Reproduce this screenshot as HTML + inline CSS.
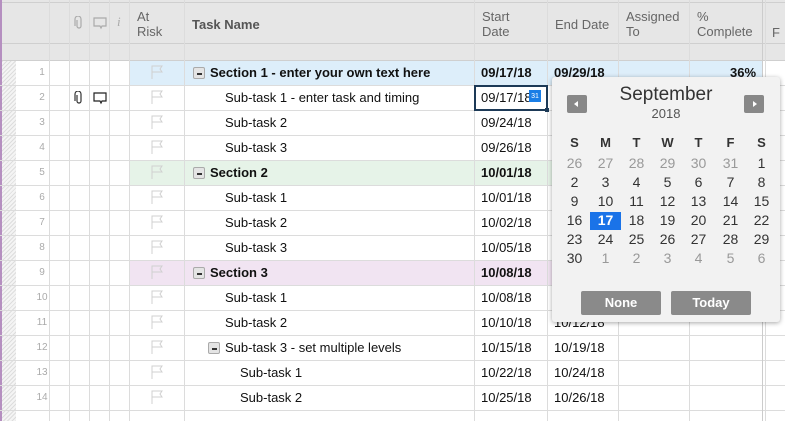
<!DOCTYPE html>
<html><head><style>
*{margin:0;padding:0;box-sizing:border-box}
body{width:785px;height:421px;overflow:hidden;background:#fff;font-family:"Liberation Sans",Arial,sans-serif;font-size:13px;color:#111;position:relative}
.a{position:absolute}
.hd{background:#e6e6e6}
.vl{position:absolute;top:0;width:1px;height:421px;background:#dcdcdc}
.hl{position:absolute;left:0;width:785px;height:1px;background:#dcdcdc}
.n{position:absolute;left:28px;width:28px;text-align:center;font-size:10px;color:#aaa}
.t{position:absolute;white-space:nowrap}
.b{font-weight:bold}
.mb{position:absolute;width:12px;height:12px;border:1px solid #aaa;background:#e4e4e4;border-radius:2px}
.mb:after{content:"";position:absolute;left:3px;top:4.5px;width:5px;height:2px;background:#333}
.fl{position:absolute;left:151px;width:12px;height:14px}
.cal{position:absolute;left:552px;top:77px;width:228px;height:245px;background:#f2f2f2;border-radius:3px;box-shadow:0 1px 5px rgba(0,0,0,.35)}
.cal span{position:absolute;width:31px;text-align:center;font-size:14px;color:#333}
.cal .g{color:#999}
.hdr{font-size:13px;color:#666}
</style></head><body>
<div class="a hd" style="left:0;top:0;width:785px;height:61px"></div>
<div class="a" style="left:0;top:2px;width:785px;height:1px;background:#cfcfcf"></div>
<div class="a" style="left:0;top:43px;width:785px;height:1px;background:#cfcfcf"></div>
<div class="a" style="left:0;top:60px;width:785px;height:1px;background:#cfcfcf"></div>
<div class="a" style="left:0;top:0;width:2px;height:421px;background:#b58fc0"></div>
<div class="a" style="left:2px;top:61px;width:14px;height:360px;background:repeating-linear-gradient(135deg,#ddd 0 1px,#f4f4f4 1px 3px)"></div>
<div class="a" style="left:129px;top:61px;width:633px;height:25px;background:#ddeefa"></div>
<div class="a" style="left:129px;top:161px;width:633px;height:25px;background:#e6f3e8"></div>
<div class="a" style="left:129px;top:261px;width:633px;height:25px;background:#f1e4f2"></div>
<div class="hl" style="top:85px"></div><div class="hl" style="top:110px"></div><div class="hl" style="top:135px"></div><div class="hl" style="top:160px"></div><div class="hl" style="top:185px"></div><div class="hl" style="top:210px"></div><div class="hl" style="top:235px"></div><div class="hl" style="top:260px"></div><div class="hl" style="top:285px"></div><div class="hl" style="top:310px"></div><div class="hl" style="top:335px"></div><div class="hl" style="top:360px"></div><div class="hl" style="top:385px"></div><div class="hl" style="top:410px"></div>
<div class="vl" style="left:49px"></div><div class="vl" style="left:69px"></div><div class="vl" style="left:89px"></div><div class="vl" style="left:109px"></div><div class="vl" style="left:129px"></div><div class="vl" style="left:184px"></div><div class="vl" style="left:474px"></div><div class="vl" style="left:547px"></div><div class="vl" style="left:618px"></div><div class="vl" style="left:689px"></div><div class="vl" style="left:762px;background:#ccc"></div><div class="vl" style="left:765px"></div>
<svg class="a" style="left:74px;top:16px" width="10" height="14" viewBox="0 0 10 14"><path d="M3 4v6a2 2 0 0 0 4 0V3a3 3 0 0 0-6 0v7" fill="none" stroke="#aaa" stroke-width="1.2"/></svg>
<svg class="a" style="left:93px;top:17px" width="14" height="13" viewBox="0 0 14 13"><path d="M1 1h12v8H9l-1 2-1-2H1z" fill="none" stroke="#aaa" stroke-width="1.2"/></svg>
<div class="t" style="left:117px;top:14px;font-style:italic;color:#aaa;font-family:'Liberation Serif',serif">i</div>
<div class="t hdr" style="left:137px;top:9px;line-height:15px">At<br>Risk</div>
<div class="t hdr b" style="left:192px;top:17px;color:#555">Task Name</div>
<div class="t hdr" style="left:482px;top:9px;line-height:15px">Start<br>Date</div>
<div class="t hdr" style="left:555px;top:17px">End Date</div>
<div class="t hdr" style="left:626px;top:9px;line-height:15px">Assigned<br>To</div>
<div class="t hdr" style="left:697px;top:9px;line-height:15px">%<br>Complete</div>
<div class="t hdr" style="left:772px;top:25px">F</div>
<div class="n" style="top:67px">1</div><div class="n" style="top:92px">2</div><div class="n" style="top:117px">3</div><div class="n" style="top:142px">4</div><div class="n" style="top:167px">5</div><div class="n" style="top:192px">6</div><div class="n" style="top:217px">7</div><div class="n" style="top:242px">8</div><div class="n" style="top:267px">9</div><div class="n" style="top:292px">10</div><div class="n" style="top:317px">11</div><div class="n" style="top:342px">12</div><div class="n" style="top:367px">13</div><div class="n" style="top:392px">14</div>
<svg width="0" height="0" style="position:absolute"><defs><path id="f" d="M1 14V1h10l-2 3 2 3H1" fill="none" stroke="#d0d0d0" stroke-width="1"/></defs></svg>
<svg class="fl" style="top:65px"><use href="#f"/></svg><svg class="fl" style="top:90px"><use href="#f"/></svg><svg class="fl" style="top:115px"><use href="#f"/></svg><svg class="fl" style="top:140px"><use href="#f"/></svg><svg class="fl" style="top:165px"><use href="#f"/></svg><svg class="fl" style="top:190px"><use href="#f"/></svg><svg class="fl" style="top:215px"><use href="#f"/></svg><svg class="fl" style="top:240px"><use href="#f"/></svg><svg class="fl" style="top:265px"><use href="#f"/></svg><svg class="fl" style="top:290px"><use href="#f"/></svg><svg class="fl" style="top:315px"><use href="#f"/></svg><svg class="fl" style="top:340px"><use href="#f"/></svg><svg class="fl" style="top:365px"><use href="#f"/></svg><svg class="fl" style="top:390px"><use href="#f"/></svg>
<svg class="a" style="left:74px;top:91px" width="10" height="14" viewBox="0 0 10 14"><path d="M3 4v6a2 2 0 0 0 4 0V3a3 3 0 0 0-6 0v7" fill="none" stroke="#333" stroke-width="1.2"/></svg>
<svg class="a" style="left:93px;top:92px" width="14" height="13" viewBox="0 0 14 13"><path d="M1 1h12v8H9l-1 2-1-2H1z" fill="none" stroke="#222" stroke-width="1.2"/></svg>
<div class="mb" style="left:193px;top:67px"></div><div class="t b" style="left:210px;top:65px">Section 1 - enter your own text here</div>
<div class="t" style="left:225px;top:90px">Sub-task 1 - enter task and timing</div>
<div class="t" style="left:225px;top:115px">Sub-task 2</div>
<div class="t" style="left:225px;top:140px">Sub-task 3</div>
<div class="mb" style="left:193px;top:167px"></div><div class="t b" style="left:210px;top:165px">Section 2</div>
<div class="t" style="left:225px;top:190px">Sub-task 1</div>
<div class="t" style="left:225px;top:215px">Sub-task 2</div>
<div class="t" style="left:225px;top:240px">Sub-task 3</div>
<div class="mb" style="left:193px;top:267px"></div><div class="t b" style="left:210px;top:265px">Section 3</div>
<div class="t" style="left:225px;top:290px">Sub-task 1</div>
<div class="t" style="left:225px;top:315px">Sub-task 2</div>
<div class="mb" style="left:208px;top:342px"></div><div class="t" style="left:225px;top:340px">Sub-task 3 - set multiple levels</div>
<div class="t" style="left:240px;top:365px">Sub-task 1</div>
<div class="t" style="left:240px;top:390px">Sub-task 2</div>
<div class="t b" style="left:481px;top:65px">09/17/18</div><div class="t b" style="left:554px;top:65px">09/29/18</div><div class="t b" style="left:730px;top:65px">36%</div>
<div class="a" style="left:474px;top:85px;width:74px;height:26px;border:2px solid #1d3a57"></div>
<div class="a" style="left:545px;top:108px;width:4px;height:4px;background:#1d3a57"></div>
<div class="t" style="left:481px;top:90px">09/17/18</div>
<div class="a" style="left:529px;top:90px;width:12px;height:12px;background:#1a7ee6;color:#fff;font-size:7px;text-align:center;line-height:14px">31</div>
<div class="t" style="left:481px;top:115px">09/24/18</div>
<div class="t" style="left:481px;top:140px">09/26/18</div>
<div class="t b" style="left:481px;top:165px">10/01/18</div>
<div class="t" style="left:481px;top:190px">10/01/18</div>
<div class="t" style="left:481px;top:215px">10/02/18</div>
<div class="t" style="left:481px;top:240px">10/05/18</div>
<div class="t b" style="left:481px;top:265px">10/08/18</div>
<div class="t" style="left:481px;top:290px">10/08/18</div>
<div class="t" style="left:481px;top:315px">10/10/18</div><div class="t" style="left:554px;top:315px">10/12/18</div>
<div class="t" style="left:481px;top:340px">10/15/18</div><div class="t" style="left:554px;top:340px">10/19/18</div>
<div class="t" style="left:481px;top:365px">10/22/18</div><div class="t" style="left:554px;top:365px">10/24/18</div>
<div class="t" style="left:481px;top:390px">10/25/18</div><div class="t" style="left:554px;top:390px">10/26/18</div>
<div class="cal">
<div class="a" style="left:15px;top:18px;width:20px;height:18px;background:#888;border-radius:2px"><div class="a" style="left:7px;top:6px;border-right:4px solid #fff;border-top:3px solid transparent;border-bottom:3px solid transparent"></div></div>
<div class="a" style="left:192px;top:18px;width:20px;height:18px;background:#888;border-radius:2px"><div class="a" style="left:9px;top:6px;border-left:4px solid #fff;border-top:3px solid transparent;border-bottom:3px solid transparent"></div></div>
<div class="a" style="left:0;top:7px;width:228px;text-align:center;font-size:19px;color:#333">September</div>
<div class="a" style="left:0;top:29px;width:228px;text-align:center;font-size:13px;color:#555">2018</div>
<div class="a" style="left:38px;top:135px;width:31px;height:18px;background:#1a73e8"></div>
<span class="b" style="left:7px;top:58px;font-size:13px">S</span><span class="b" style="left:38px;top:58px;font-size:13px">M</span><span class="b" style="left:69px;top:58px;font-size:13px">T</span><span class="b" style="left:100px;top:58px;font-size:13px">W</span><span class="b" style="left:131px;top:58px;font-size:13px">T</span><span class="b" style="left:163px;top:58px;font-size:13px">F</span><span class="b" style="left:194px;top:58px;font-size:13px">S</span>
<span class="g" style="left:7px;top:78px">26</span><span class="g" style="left:38px;top:78px">27</span><span class="g" style="left:69px;top:78px">28</span><span class="g" style="left:100px;top:78px">29</span><span class="g" style="left:131px;top:78px">30</span><span class="g" style="left:163px;top:78px">31</span><span style="left:194px;top:78px">1</span>
<span style="left:7px;top:97px">2</span><span style="left:38px;top:97px">3</span><span style="left:69px;top:97px">4</span><span style="left:100px;top:97px">5</span><span style="left:131px;top:97px">6</span><span style="left:163px;top:97px">7</span><span style="left:194px;top:97px">8</span>
<span style="left:7px;top:116px">9</span><span style="left:38px;top:116px">10</span><span style="left:69px;top:116px">11</span><span style="left:100px;top:116px">12</span><span style="left:131px;top:116px">13</span><span style="left:163px;top:116px">14</span><span style="left:194px;top:116px">15</span>
<span style="left:7px;top:135px">16</span><span class="b" style="left:38px;top:135px;color:#fff">17</span><span style="left:69px;top:135px">18</span><span style="left:100px;top:135px">19</span><span style="left:131px;top:135px">20</span><span style="left:163px;top:135px">21</span><span style="left:194px;top:135px">22</span>
<span style="left:7px;top:154px">23</span><span style="left:38px;top:154px">24</span><span style="left:69px;top:154px">25</span><span style="left:100px;top:154px">26</span><span style="left:131px;top:154px">27</span><span style="left:163px;top:154px">28</span><span style="left:194px;top:154px">29</span>
<span style="left:7px;top:173px">30</span><span class="g" style="left:38px;top:173px">1</span><span class="g" style="left:69px;top:173px">2</span><span class="g" style="left:100px;top:173px">3</span><span class="g" style="left:131px;top:173px">4</span><span class="g" style="left:163px;top:173px">5</span><span class="g" style="left:194px;top:173px">6</span>
<div class="a b" style="left:29px;top:214px;width:80px;height:24px;background:#8a8a8a;color:#fff;text-align:center;line-height:24px;border-radius:2px">None</div>
<div class="a b" style="left:119px;top:214px;width:80px;height:24px;background:#8a8a8a;color:#fff;text-align:center;line-height:24px;border-radius:2px">Today</div>
</div>
</body></html>
